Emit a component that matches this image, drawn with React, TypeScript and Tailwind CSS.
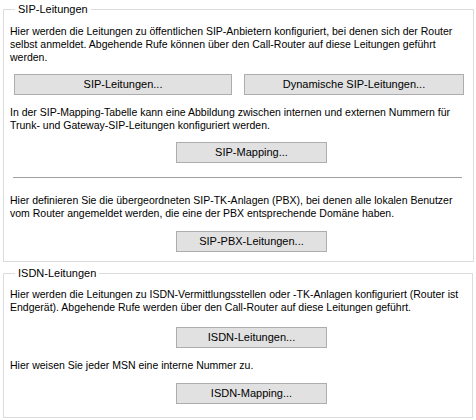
import React from 'react';

const Btn = ({ label, className = '' }: { label: string; className?: string }) => (
  <button className={`h-[21px] border border-[#adadad] bg-[#e1e1e1] text-center text-[11px] leading-[19px] text-black ${className}`}>
    {label}
  </button>
);

const App = () => {
  return (
    <div className="w-[476px] h-[420px] bg-white px-[3px] pt-[3px] font-['Liberation_Sans',Arial,sans-serif] text-[10.5px] leading-[13px] text-black">
      <fieldset className="w-[470px] h-[259px] border border-[#dcdcdc] pl-[6px] pr-[9px]">
        <legend className="ml-[5px] px-[3px] text-[11px] leading-[13px]">SIP-Leitungen</legend>
        <p className="mt-[9px] whitespace-nowrap">
          Hier werden die Leitungen zu öffentlichen SIP-Anbietern konfiguriert, bei denen sich der Router
          <br />
          selbst anmeldet. Abgehende Rufe können über den Call-Router auf diese Leitungen geführt
          <br />
          werden.
        </p>
        <div className="mt-[10px] ml-[4px] flex gap-[12px]">
          <Btn label="SIP-Leitungen..." className="w-[218px]" />
          <Btn label="Dynamische SIP-Leitungen..." className="w-[220px]" />
        </div>
        <p className="mt-[11px] whitespace-nowrap">
          In der SIP-Mapping-Tabelle kann eine Abbildung zwischen internen und externen Nummern für
          <br />
          Trunk- und Gateway-SIP-Leitungen konfiguriert werden.
        </p>
        <Btn label="SIP-Mapping..." className="mt-[10px] ml-[166px] w-[151px]" />
        <div className="mt-[14px] ml-[3px] w-[449px] border-t border-[#a0a0a0]" />
        <p className="mt-[16px] whitespace-nowrap">
          Hier definieren Sie die übergeordneten SIP-TK-Anlagen (PBX), bei denen alle lokalen Benutzer
          <br />
          vom Router angemeldet werden, die eine der PBX entsprechende Domäne haben.
        </p>
        <Btn label="SIP-PBX-Leitungen..." className="mt-[11px] ml-[166px] w-[151px]" />
      </fieldset>

      <fieldset className="mt-[5px] w-[470px] h-[151px] border border-[#dcdcdc] pl-[6px] pr-[9px]">
        <legend className="ml-[5px] px-[3px] text-[11px] leading-[13px]">ISDN-Leitungen</legend>
        <p className="mt-[8px] whitespace-nowrap">
          Hier werden die Leitungen zu ISDN-Vermittlungsstellen oder -TK-Anlagen konfiguriert (Router ist
          <br />
          Endgerät). Abgehende Rufe werden über den Call-Router auf diese Leitungen geführt.
        </p>
        <Btn label="ISDN-Leitungen..." className="mt-[13px] ml-[166px] w-[151px]" />
        <p className="mt-[11px] whitespace-nowrap">Hier weisen Sie jeder MSN eine interne Nummer zu.</p>
        <Btn label="ISDN-Mapping..." className="mt-[11px] ml-[166px] w-[151px]" />
      </fieldset>
    </div>
  );
};

export default App;
